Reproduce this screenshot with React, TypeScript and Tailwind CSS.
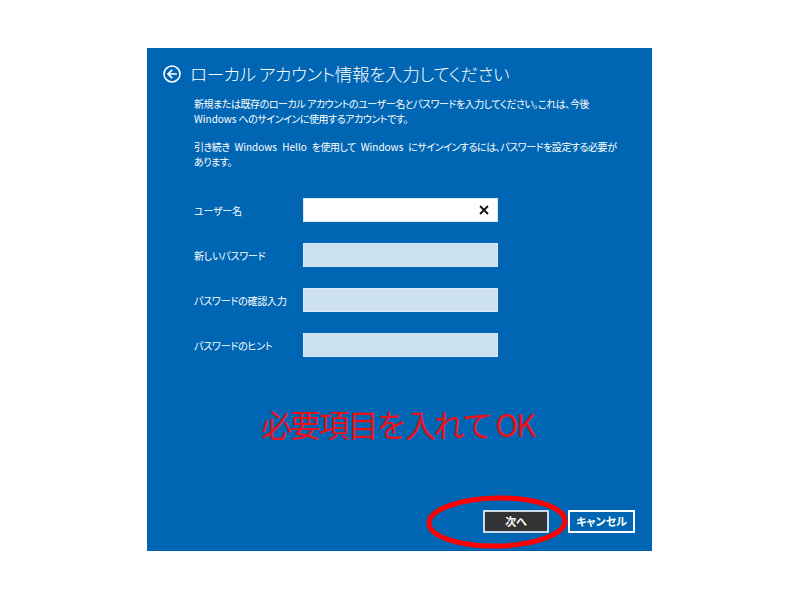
const JP = "font-['Noto_Sans_CJK_JP',sans-serif] [font-feature-settings:'palt']";

const FIELDS = ["ユーザー名", "新しいパスワード", "パスワードの確認入力", "パスワードのヒント"];

function BackIcon() {
  return (
    <svg width="18" height="18" viewBox="0 0 18 18" fill="none" stroke="white" strokeWidth="1.6">
      <circle cx="9" cy="9" r="8" />
      <path d="M13 9H5.2M8.6 5.4L5 9l3.6 3.6" strokeLinecap="square" />
    </svg>
  );
}

export default function App() {
  return (
    <div className={`w-[800px] h-[600px] bg-white pt-[48px] pl-[147px] ${JP}`}>
      <div className="relative w-[505px] h-[503px] bg-[#0066b3] flex flex-col text-white">
        <div className="flex items-center gap-[9px] pl-[16px] mt-[12px] h-[28px]">
          <BackIcon />
          <h1 className="text-[17.6px] font-light leading-[28px] tracking-[-0.4px]">ローカル アカウント情報を入力してください</h1>
        </div>

        <div className="ml-[47px] mt-[8px] text-[10px] leading-[15px] tracking-[-0.45px] whitespace-nowrap">
          <p>
            新規または既存のローカル アカウントのユーザー名とパスワードを入力してください。これは、今後
            <br />
            <span className="tracking-normal">Windows</span> へのサインインに使用するアカウントです。
          </p>
          <p className="mt-[13px] [word-spacing:3px]">
            引き続き <span className="tracking-normal">Windows Hello</span> を使用して{" "}
            <span className="tracking-normal">Windows</span> にサインインするには、パスワードを設定する必要が
            <br />
            あります。
          </p>
        </div>

        <div className="ml-[47px] mt-[29px] flex flex-col gap-[21px]">
          {FIELDS.map((f, i) => (
            <div key={f} className="flex items-center h-[24px]">
              <span className="w-[109px] text-[10px] tracking-[-0.2px]">{f}</span>
              {i === 0 ? (
                <div className="w-[195px] h-[24px] bg-white border border-[#dbe6ef] flex items-center justify-end pr-[8px]">
                  <svg width="10" height="10" viewBox="0 0 10 10" stroke="#111" strokeWidth="1.8">
                    <path d="M1 1l8 8M9 1l-8 8" />
                  </svg>
                </div>
              ) : (
                <div className="w-[195px] h-[24px] bg-[#cde2f1] border border-[#d9e8f4]" />
              )}
            </div>
          ))}
        </div>

        <p className="ml-[114px] mt-[47px] text-[31px] leading-[40px] text-[#ee1018] font-normal font-['Noto_Sans_CJK_JP',sans-serif] [font-feature-settings:normal] tracking-[-2.2px]">
          必要項目を入れて OK
        </p>

        <div className="mt-auto mb-[18px] mr-[17px] flex justify-end gap-[19px]">
          <button className="w-[66px] h-[23px] bg-[#333333] border-2 border-[#c9dceb] text-[11px] font-bold leading-none">
            次へ
          </button>
          <button className="w-[67px] h-[23px] border-2 border-white text-[11px] font-bold leading-none">
            キャンセル
          </button>
        </div>

        <svg className="absolute left-[277px] top-[446px]" width="146" height="56" viewBox="0 0 146 56" fill="none">
          <ellipse cx="73" cy="28" rx="68" ry="24" stroke="#ff0000" strokeWidth="5" transform="rotate(-1 73 28)" />
        </svg>
      </div>
    </div>
  );
}
